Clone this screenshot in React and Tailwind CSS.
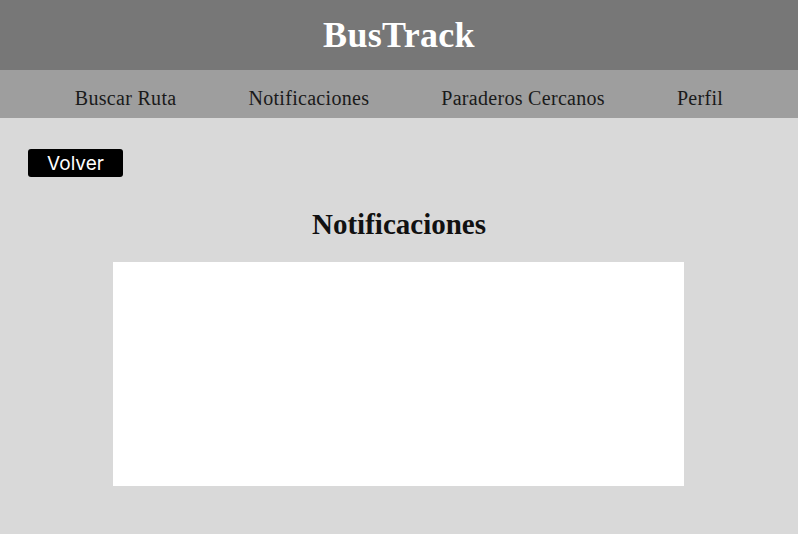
export default function App() {
  const serif = { fontFamily: '"Liberation Serif", "DejaVu Serif", serif' };
  return (
    <div className="min-h-[534px] w-full bg-[#d9d9d9] flex flex-col">
      <header className="h-[70px] bg-[#777777] flex items-center justify-center">
        <h1 className="text-[36px] font-bold text-white leading-none tracking-[0.3px]" style={serif}>BusTrack</h1>
      </header>
      <nav className="h-[48px] pt-[7px] bg-[#9e9e9e] flex items-center justify-center gap-[72px] text-[20px] tracking-[0.3px] text-[#1a1a1a]" style={serif}>
        <span>Buscar Ruta</span>
        <span>Notificaciones</span>
        <span>Paraderos Cercanos</span>
        <span>Perfil</span>
      </nav>
      <main className="flex flex-col pt-[31px]">
        <div className="pl-[28px]">
          <button className="w-[95px] h-[28px] bg-black text-white rounded-[3px] text-[19px] leading-none flex items-center justify-center" style={{ fontFamily: 'Inter, "Liberation Sans", sans-serif' }}>Volver</button>
        </div>
        <h2 className="mt-[29px] text-center text-[29px] font-bold text-[#111111] leading-[36px]" style={serif}>Notificaciones</h2>
        <div className="mt-[20px] ml-[113px] w-[571px] h-[224px] bg-white"></div>
      </main>
    </div>
  );
}
